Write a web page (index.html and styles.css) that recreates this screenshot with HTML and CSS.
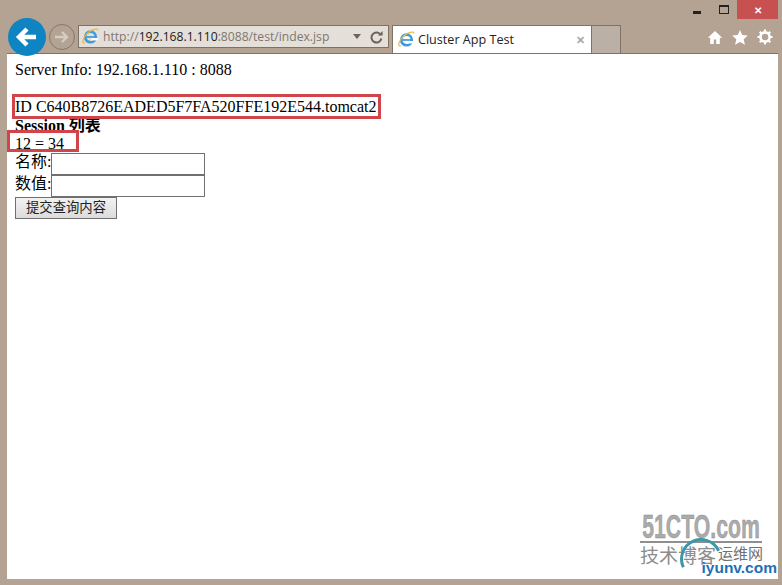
FILE: index.html
```html
<!DOCTYPE html>
<html lang="en">
<head>
  <meta charset="UTF-8">
  <meta name="viewport" content="width=device-width, initial-scale=1.0">
  <title>Cluster App Test</title>
  <link rel="stylesheet" href="styles.css">
</head>
<body>
  <svg class="defs" width="0" height="0">
    <symbol id="ie" viewBox="0 0 18 18">
      <circle cx="9" cy="9.5" r="5.6" fill="none" stroke="#3f9bdc" stroke-width="2.8"/>
      <rect x="4" y="8.6" width="10" height="1.8" fill="#3f9bdc"/>
      <rect x="10" y="10.6" width="7" height="2.6" fill="#fff"/>
      <path d="M3 15.5C-1 17 1 10 5.5 5.8 10 1.6 17 -.5 16.8 2.6" fill="none" stroke="#e8b93c" stroke-width="1.2"/>
    </symbol>
  </svg>

  <header class="chrome">
    <div class="window-buttons">
      <span class="win-btn"><i class="min"></i></span>
      <span class="win-btn"><i class="max"></i></span>
      <span class="win-btn close">&#10005;</span>
    </div>
    <div class="toolbar">
      <button class="back" aria-label="Back">
        <svg width="24" height="22" viewBox="0 0 24 22"><path d="M21 11H5M12 3l-8 8 8 8" fill="none" stroke="#fff" stroke-width="4.4"/></svg>
      </button>
      <button class="forward" aria-label="Forward">
        <svg width="16" height="14" viewBox="0 0 16 14"><path d="M1 7h12M8 2l5 5-5 5" fill="none" stroke="#d4cdc5" stroke-width="2.4"/></svg>
      </button>
      <div class="address">
        <svg class="favicon" width="17" height="17"><use href="#ie"/></svg>
        <span class="url">http://<b>192.168.1.110</b>:8088/test/index.jsp</span>
        <i class="caret"></i>
        <svg class="refresh" width="13" height="14" viewBox="0 0 13 14"><path d="M10.8 5A5 5 0 1 0 11.4 8.5" fill="none" stroke="#6b625a" stroke-width="2"/><path d="M8 5.6h4.6V1z" fill="#6b625a"/></svg>
      </div>
      <div class="tab">
        <svg class="favicon" width="17" height="17"><use href="#ie"/></svg>
        <span class="tab-title">Cluster App Test</span>
        <span class="tab-close">&#10005;</span>
      </div>
      <div class="new-tab"></div>
      <div class="tools">
        <svg width="16" height="15" viewBox="0 0 16 15"><path d="M8 1 .8 7.8h2.4V14h3.6V9.6h2.4V14h3.6V7.8h2.4z" fill="#fff"/></svg>
        <svg width="16" height="15" viewBox="0 0 16 15"><path d="M8 0l2.3 5 5.5.6-4.1 3.7 1.2 5.5L8 12l-4.9 2.8 1.2-5.5L.2 5.6 5.7 5z" fill="#fff"/></svg>
        <svg width="16" height="16" viewBox="0 0 16 16"><circle cx="8" cy="8" r="4.6" fill="none" stroke="#fff" stroke-width="2.6"/><path d="M8 .5v15M.5 8h15M2.7 2.7l10.6 10.6M13.3 2.7 2.7 13.3" stroke="#fff" stroke-width="2.2" stroke-dasharray="3 9"/></svg>
      </div>
    </div>
  </header>

  <main class="content">
    <div>Server Info: 192.168.1.110 : 8088</div>
    <div class="gap"></div>
    <div>ID C640B8726EADED5F7FA520FFE192E544.tomcat2</div>
    <div class="session-title"><b>Session 列表</b></div>
    <div>12 = 34</div>
    <form>
      <div class="field">名称:<input type="text"></div>
      <div class="field">数值:<input type="text"></div>
      <button type="button" class="submit">提交查询内容</button>
    </form>

    <div class="mark mark-id"></div>
    <div class="mark mark-row"></div>

    <div class="watermark">
      <svg class="wm-logo" width="122" height="30" viewBox="0 0 122 30">
        <text x="-2" y="27" textLength="126" lengthAdjust="spacingAndGlyphs">51CTO.com</text>
      </svg>
      <div class="wm-line">
        <span class="wm-blog">技术博客</span>
        <span class="wm-ops">运维网</span>
      </div>
      <div class="wm-site">iyunv.com</div>
      <div class="wm-arc"></div>
    </div>
  </main>
</body>
</html>
```

FILE: styles.css
```css
:root {
  --frame: #b4a292;
  --frame-line: #7f7265;
  --mark: #d0444a;
}

* {
  box-sizing: border-box;
}

html, body {
  height: 100%;
}

body {
  margin: 0;
  background: var(--frame);
  display: flex;
  flex-direction: column;
  font-family: 'Liberation Serif', 'Noto Sans CJK SC', serif;
  overflow: hidden;
}

.defs {
  position: absolute;
}

.chrome {
  height: 53px;
  flex: none;
  font-family: 'Open Sans', 'Noto Sans', sans-serif;
}

.window-buttons {
  display: flex;
  justify-content: flex-end;
  height: 19px;
  padding-right: 4px;
}

.win-btn {
  width: 27px;
  display: flex;
  align-items: center;
  justify-content: center;
}

.win-btn .min {
  width: 8px;
  height: 3px;
  margin-top: 6px;
  background: #222;
}

.win-btn .max {
  width: 10px;
  height: 9px;
  border: 1px solid #222;
  border-top-width: 2px;
}

.win-btn.close {
  width: 41px;
  background: #c75050;
  color: #fff;
  font-size: 10px;
  font-weight: bold;
}

.toolbar {
  display: flex;
  align-items: flex-start;
  height: 34px;
  padding-left: 8px;
  margin-top: -1px;
}

.back {
  width: 38px;
  height: 38px;
  margin-right: 2px;
  padding: 0;
  border: none;
  border-radius: 50%;
  background: #0f84c2;
  display: flex;
  align-items: center;
  justify-content: center;
  z-index: 1;
}

.forward {
  width: 26px;
  height: 26px;
  margin: 6px 3px 0 1px;
  padding: 0;
  border: 1px solid #85786b;
  border-radius: 50%;
  background: transparent;
  display: flex;
  align-items: center;
  justify-content: center;
}

.address {
  width: 311px;
  height: 23px;
  margin-top: 7px;
  padding: 0 4px 0 3px;
  background: #e4dfd9;
  border: 1px solid var(--frame-line);
  display: flex;
  align-items: center;
}

.favicon {
  flex: none;
}

.url {
  margin-left: 4px;
  font-size: 12.15px;
  color: #80776f;
  flex: 1;
  white-space: nowrap;
}

.url b {
  font-weight: normal;
  color: #1c1c1c;
}

.caret {
  width: 0;
  height: 0;
  margin-right: 9px;
  border-left: 4px solid transparent;
  border-right: 4px solid transparent;
  border-top: 5px solid #6b625a;
}

.refresh {
  flex: none;
  margin-right: 1px;
}

.tab {
  width: 200px;
  height: 28px;
  margin-top: 7px;
  margin-left: 3px;
  padding: 0 6px 0 5px;
  background: #fff;
  border: 1px solid var(--frame-line);
  border-bottom: none;
  display: flex;
  align-items: center;
}

.tab-title {
  flex: 1;
  margin-left: 3px;
  font-size: 12.6px;
  color: #222;
  white-space: nowrap;
}

.tab-close {
  font-size: 11px;
  font-weight: bold;
  color: #a8a8a8;
}

.new-tab {
  width: 29px;
  height: 28px;
  margin-top: 7px;
  background: #bbb0a6;
  border: 1px solid var(--frame-line);
  border-left: none;
  border-bottom: none;
}

.tools {
  display: flex;
  align-items: center;
  gap: 9px;
  margin: 11px 9px 0 auto;
}

.content {
  position: relative;
  flex: 1;
  margin: 0 4px 6px 7px;
  padding: 7px 8px;
  background: #fff;
  border-top: 1px solid var(--frame-line);
  font-size: 16px;
  line-height: 18px;
  color: #000;
}

.gap {
  height: 19px;
}

.session-title {
  margin-top: 1px;
}

.field {
  display: flex;
  align-items: flex-start;
  height: 22px;
}

.field input {
  width: 154px;
  height: 22px;
  margin: 0;
  padding: 1px;
  background: #fff;
  border: 1px solid #707070;
}

.submit {
  display: block;
  width: 102px;
  height: 22px;
  padding: 0 0 2px;
  background: linear-gradient(#f2f2f2, #dcdcdc);
  border: 1px solid #707070;
  font-family: 'Noto Sans CJK SC', sans-serif;
  font-size: 13.33px;
  line-height: 18px;
  color: #222;
}

.mark {
  position: absolute;
  border: 3px solid var(--mark);
}

.mark-id {
  left: 5px;
  top: 40px;
  width: 369px;
  height: 25px;
}

.mark-row {
  left: 0;
  top: 76px;
  width: 72px;
  height: 22px;
}

.watermark {
  position: absolute;
  left: 633px;
  top: 459px;
  width: 137px;
  height: 62px;
}

.wm-logo {
  display: block;
  overflow: visible;
  border-bottom: 2px solid #8f8f8f;
  font-family: 'Liberation Sans', sans-serif;
  font-size: 36px;
  font-weight: bold;
  fill: #ababab;
  stroke: #8a8a8a;
  stroke-width: .5px;
}

.wm-line {
  display: flex;
  align-items: flex-start;
  margin-top: 2px;
  font-family: 'Noto Sans CJK SC', sans-serif;
  color: #8d8d8d;
}

.wm-blog {
  font-size: 19px;
  line-height: 20px;
}

.wm-ops {
  margin-left: 2px;
  font-size: 15px;
  line-height: 15px;
  color: #707070;
}

.wm-site {
  position: absolute;
  right: 0;
  bottom: 0;
  font-family: 'Liberation Sans', sans-serif;
  font-size: 15.5px;
  font-weight: bold;
  line-height: 14px;
  color: #1f6fb8;
}

.wm-arc {
  position: absolute;
  left: 40px;
  top: 25px;
  width: 42px;
  height: 42px;
  border: 3px solid #3d97a8;
  border-right-color: transparent;
  border-bottom-color: transparent;
  border-radius: 50%;
  transform: rotate(20deg);
}
```
